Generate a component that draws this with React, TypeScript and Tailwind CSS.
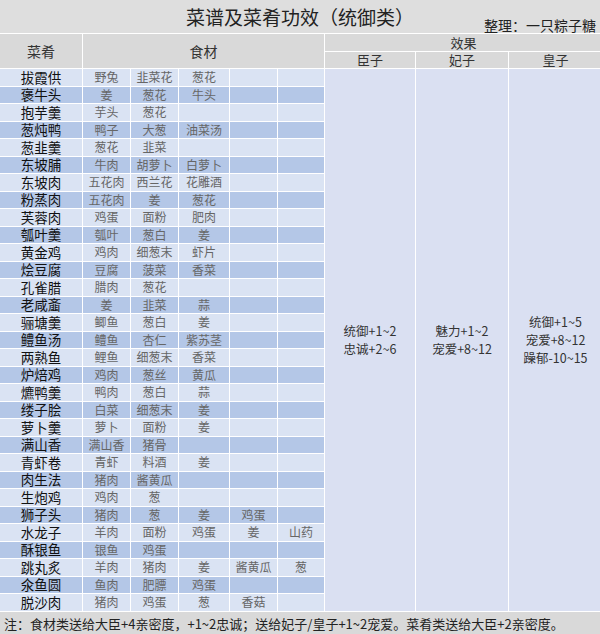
const dishes: [string, string[]][] = [
  ["拔霞供", ["野兔", "韭菜花", "葱花"]],
  ["褒牛头", ["姜", "葱花", "牛头"]],
  ["抱芋羹", ["芋头", "葱花"]],
  ["葱炖鸭", ["鸭子", "大葱", "油菜汤"]],
  ["葱韭羹", ["葱花", "韭菜"]],
  ["东坡脯", ["牛肉", "胡萝卜", "白萝卜"]],
  ["东坡肉", ["五花肉", "西兰花", "花雕酒"]],
  ["粉蒸肉", ["五花肉", "姜", "葱花"]],
  ["芙蓉肉", ["鸡蛋", "面粉", "肥肉"]],
  ["瓠叶羹", ["瓠叶", "葱白", "姜"]],
  ["黄金鸡", ["鸡肉", "细葱末", "虾片"]],
  ["烩豆腐", ["豆腐", "菠菜", "香菜"]],
  ["孔雀腊", ["腊肉", "葱花"]],
  ["老咸齑", ["姜", "韭菜", "蒜"]],
  ["骊塘羹", ["鲫鱼", "葱白", "姜"]],
  ["鳢鱼汤", ["鳢鱼", "杏仁", "紫苏茎"]],
  ["两熟鱼", ["鲤鱼", "细葱末", "香菜"]],
  ["炉焙鸡", ["鸡肉", "葱丝", "黄瓜"]],
  ["爊鸭羹", ["鸭肉", "葱白", "蒜"]],
  ["缕子脍", ["白菜", "细葱末", "姜"]],
  ["萝卜羹", ["萝卜", "面粉", "姜"]],
  ["满山香", ["满山香", "猪骨"]],
  ["青虾卷", ["青虾", "料酒", "姜"]],
  ["肉生法", ["猪肉", "酱黄瓜"]],
  ["生炮鸡", ["鸡肉", "葱"]],
  ["狮子头", ["猪肉", "葱", "姜", "鸡蛋"]],
  ["水龙子", ["羊肉", "面粉", "鸡蛋", "姜", "山药"]],
  ["酥银鱼", ["银鱼", "鸡蛋"]],
  ["跳丸炙", ["羊肉", "猪肉", "姜", "酱黄瓜", "葱"]],
  ["氽鱼圆", ["鱼肉", "肥膘", "鸡蛋"]],
  ["脱沙肉", ["猪肉", "鸡蛋", "葱", "香菇"]],
]

const effects = [
  ["统御+1~2", "忠诚+2~6"],
  ["魅力+1~2", "宠爱+8~12"],
  ["统御+1~5", "宠爱+8~12", "躁郁-10~15"],
]

const font = { fontFamily: '"Noto Sans CJK SC", "Noto Sans", sans-serif' }

export default function App() {
  return (
    <div className="w-[600px] h-[634px] bg-white overflow-hidden text-[#222]" style={font}>
      {/* Title */}
      <div className="relative h-[33px] bg-[#dedede] flex items-center justify-center">
        <h1 className="text-[19px] leading-none text-[#222]">菜谱及菜肴功效（统御类）</h1>
        <span className="absolute right-1 bottom-[1px] text-[14px] leading-none text-[#222]">整理：一只粽子糖</span>
      </div>

      {/* Table */}
      <div className="mt-px grid gap-px bg-white grid-cols-[82px_47px_47px_50px_47px_46px_90px_92px_93px] grid-rows-[16.5px_16.5px_repeat(31,16.5px)]">
        <div className="row-span-2 bg-[#d9d9d9] flex items-center justify-center text-[14px] text-[#333]">菜肴</div>
        <div className="col-span-5 row-span-2 bg-[#d9d9d9] flex items-center justify-center text-[14px] text-[#333]">食材</div>
        <div className="col-span-3 bg-[#d9d9d9] flex items-center justify-center text-[13px] text-[#333]">效果</div>
        <div className="bg-[#d9d9d9] flex items-center justify-center text-[13px] text-[#333]">臣子</div>
        <div className="bg-[#d9d9d9] flex items-center justify-center text-[13px] text-[#333]">妃子</div>
        <div className="bg-[#d9d9d9] flex items-center justify-center text-[13px] text-[#333]">皇子</div>

        {dishes.map(([name, items], i) => {
          const bg = i % 2 === 0 ? "bg-[#dae3f3]" : "bg-[#b4c7e7]"
          const cells = [0, 1, 2, 3, 4].map((k) => items[k] ?? "")
          return [
            <div
              key={name}
              className={`${bg} col-start-1 flex items-center justify-center text-[13.5px] text-[#111] leading-none`}
              style={{ gridRowStart: i + 3 }}
            >
              {name}
            </div>,
            ...cells.map((c, k) => (
              <div
                key={name + k}
                className={`${bg} flex items-center justify-center text-[12px] text-[#666] leading-none`}
                style={{ gridRowStart: i + 3, gridColumnStart: k + 2 }}
              >
                {c}
              </div>
            )),
          ]
        })}

        {effects.map((lines, k) => (
          <div
            key={k}
            className="bg-[#dae0f2] row-start-3 row-span-31 flex flex-col items-center justify-center text-[12.5px] leading-[18px] text-[#333]"
            style={{ gridColumnStart: k + 7 }}
          >
            {lines.map((l) => (
              <div key={l}>{l}</div>
            ))}
          </div>
        ))}
      </div>

      {/* Footer */}
      <div className="mt-px h-[24px] bg-[#d9d9d9] flex items-center pl-1 text-[13px] text-[#222]">
        注：食材类送给大臣+4亲密度，+1~2忠诚；送给妃子/皇子+1~2宠爱。菜肴类送给大臣+2亲密度。
      </div>
    </div>
  )
}
